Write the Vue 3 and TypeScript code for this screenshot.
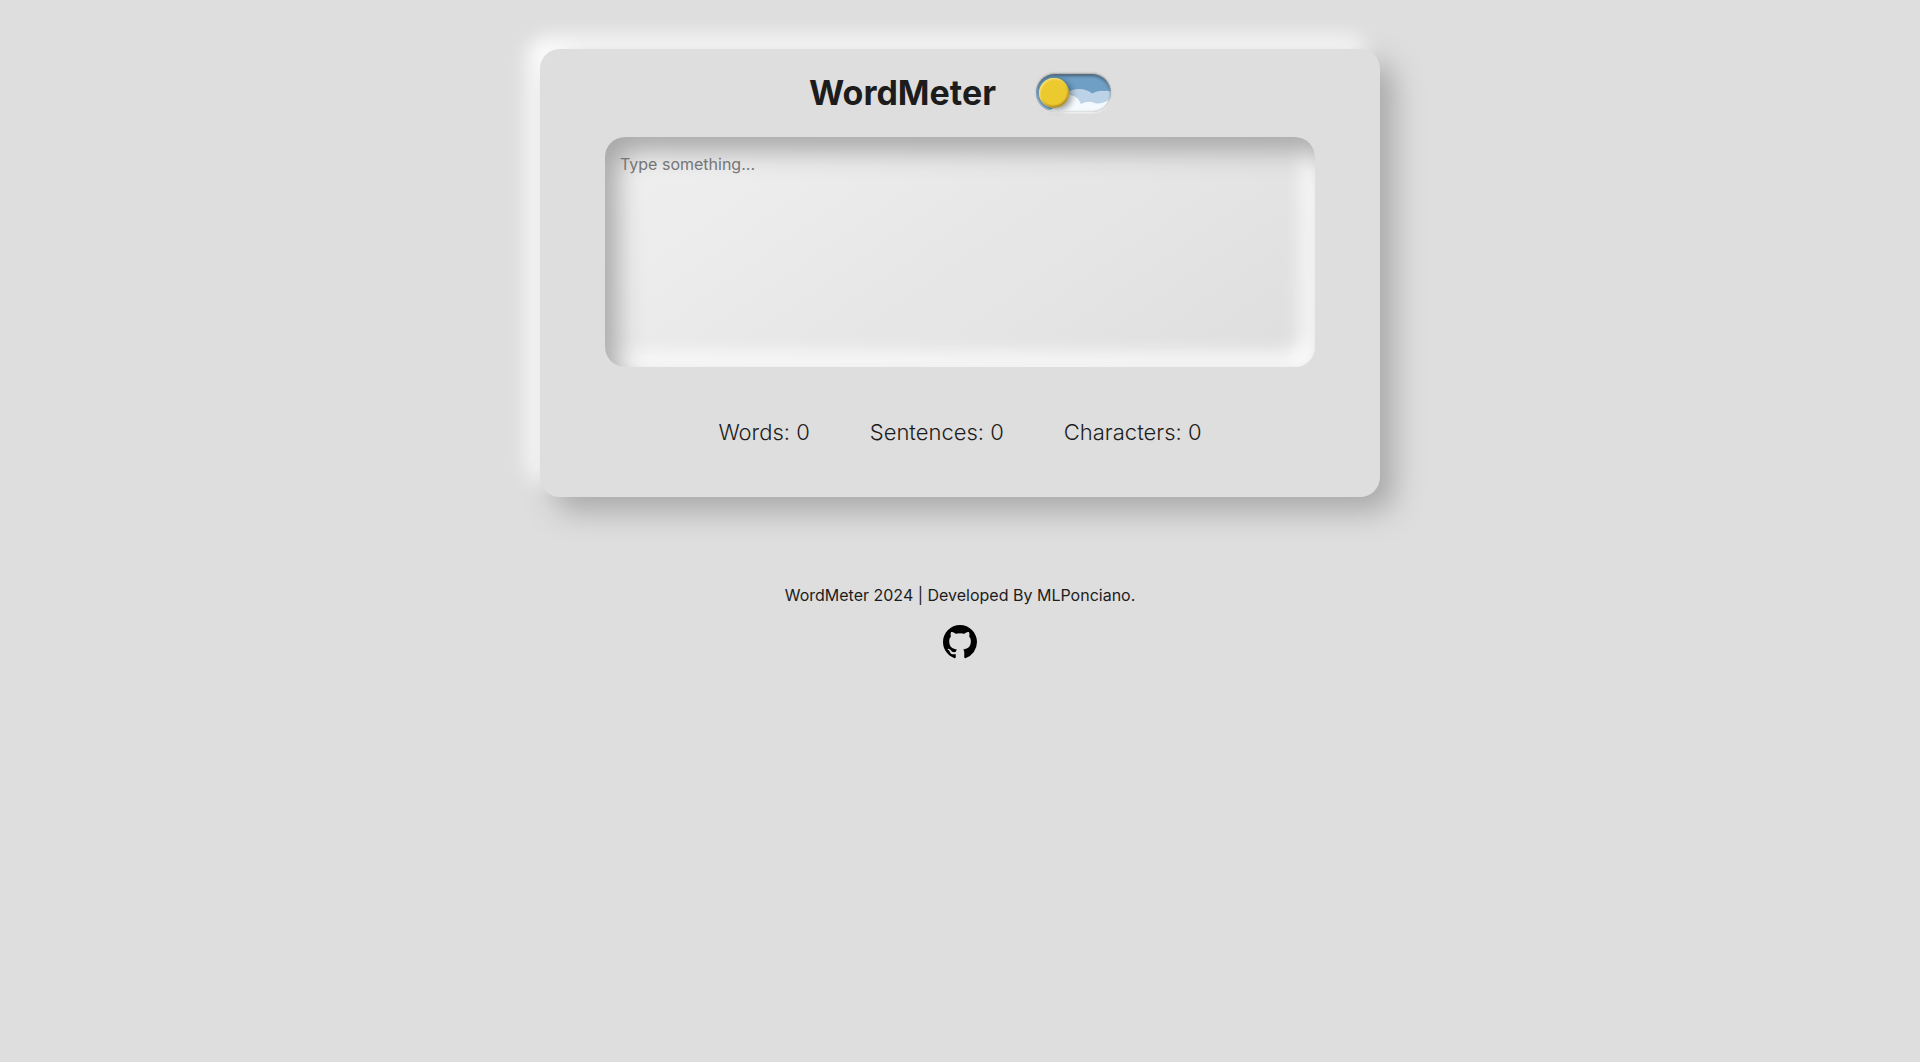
<script setup lang="ts">
import { computed, ref } from 'vue'

const text = ref('')
const dark = ref(false)

const stats = computed(() => [
  { label: 'Words', value: text.value.split(/\s+/).filter(Boolean).length },
  { label: 'Sentences', value: text.value.split(/[.!?]+/).filter((s) => s.trim()).length },
  { label: 'Characters', value: text.value.length },
])
</script>

<template>
  <div class="page" :class="{ dark }">
    <main class="card">
      <header class="head">
        <h1>WordMeter</h1>
        <label class="switch">
          <input v-model="dark" type="checkbox" aria-label="Dark mode" />
          <svg class="sky" viewBox="0 0 75 38" aria-hidden="true">
            <g class="clouds">
              <path
                fill="#bcd2e6"
                d="M30 38V19Q36 15 43 15Q51 15 56 19.500Q62 16 68 17Q73 16 76 18V38Z"
              />
              <path
                fill="#f4fafd"
                d="M8 38Q18 36 24 28Q28 20 34 21Q42 22 45 30Q53 26 60 29.500Q67 30 76 24V38Z"
              />
            </g>
          </svg>
          <span class="sun"></span>
          <span class="rim"></span>
        </label>
      </header>
      <textarea v-model="text" placeholder="Type something..." aria-label="Text to measure"></textarea>
      <div class="stats">
        <span v-for="stat in stats" :key="stat.label">{{ stat.label }}: {{ stat.value }}</span>
      </div>
    </main>
    <footer class="foot">
      <p>WordMeter 2024 | Developed By MLPonciano.</p>
      <a href="#" aria-label="GitHub">
        <svg viewBox="0 0 16 16" aria-hidden="true">
          <path
            d="M8 0C3.58 0 0 3.58 0 8c0 3.54 2.29 6.53 5.47 7.59.4.07.55-.17.55-.38 0-.19-.01-.82-.01-1.49-2.01.37-2.53-.49-2.69-.94-.09-.23-.48-.94-.82-1.13-.28-.15-.68-.52-.01-.53.63-.01 1.08.58 1.23.82.72 1.21 1.87.87 2.33.66.07-.52.28-.87.51-1.07-1.78-.2-3.64-.89-3.64-3.95 0-.87.31-1.59.82-2.15-.08-.2-.36-1.02.08-2.12 0 0 .67-.21 2.2.82.64-.18 1.32-.27 2-.27s1.36.09 2 .27c1.53-1.04 2.2-.82 2.2-.82.44 1.1.16 1.92.08 2.12.51.56.82 1.27.82 2.15 0 3.07-1.87 3.75-3.65 3.95.29.25.54.73.54 1.48 0 1.07-.01 1.93-.01 2.2 0 .21.15.46.55.38A8.01 8.01 0 0 0 16 8c0-4.42-3.58-8-8-8z"
          />
        </svg>
      </a>
    </footer>
  </div>
</template>

<style>
body {
  margin: 0;
  background: #dedede;
}
</style>

<style scoped>
.page {
  box-sizing: border-box;
  min-height: 100vh;
  padding: 49px 24px 24px;
  display: flex;
  flex-direction: column;
  align-items: center;
  background: #dedede;
  color: #1c1c1c;
  font-family: Inter, "Open Sans", sans-serif;
}
.page.dark {
  background: #cfcfcf;
}
.card {
  box-sizing: border-box;
  width: 100%;
  max-width: 840px;
  padding: 0 65px;
  border-radius: 20px;
  background: #dedede;
  box-shadow: 14px 14px 30px #a8a8a8, -12px -12px 20px #ffffff;
}
.head {
  display: flex;
  align-items: center;
  justify-content: center;
  gap: 40px;
  height: 88px;
}
h1 {
  margin: 0;
  font-size: 34px;
  line-height: 48px;
  font-weight: 700;
}
.switch {
  position: relative;
  width: 75px;
  height: 38px;
  border-radius: 19px;
  background: #6f9fc4;
  box-shadow: 0 -1px 2px rgba(0, 0, 0, 0.25), 0 1px 2px rgba(255, 255, 255, 0.8);
  cursor: pointer;
}
.switch input {
  position: absolute;
  inset: 0;
  margin: 0;
  opacity: 0;
}
.sky {
  display: block;
  width: 100%;
  height: 100%;
  border-radius: 19px;
}
.sun {
  position: absolute;
  top: 4px;
  left: 3px;
  width: 30px;
  height: 30px;
  border-radius: 50%;
  background: #ecca2f;
  box-shadow: inset 1px 1px 2px #fbe98c, inset -1px -2px 2px #a9882b, 3px 2px 6px rgba(0, 0, 0, 0.4);
}
.switch input:checked ~ .sun {
  left: 42px;
}
.rim {
  position: absolute;
  inset: 0;
  border-radius: 19px;
  box-shadow: inset 0 2px 3px rgba(20, 30, 40, 0.5), inset 0 -1px 2px rgba(222, 222, 222, 0.9), inset 0 0 2px rgba(222, 222, 222, 0.8);
  pointer-events: none;
}
textarea {
  box-sizing: border-box;
  display: block;
  width: 100%;
  height: 230px;
  padding: 15px;
  border: 0;
  border-radius: 20px;
  outline: 0;
  resize: none;
  background: linear-gradient(145deg, #f0f0f0, #dedede);
  box-shadow: inset 12px 14px 26px #a8a8a8, inset -12px -12px 20px #ffffff;
  color: #1c1c1c;
  font: 400 16px/24px Inter, "Open Sans", sans-serif;
}
textarea::placeholder {
  color: #757575;
}
.stats {
  display: flex;
  flex-wrap: wrap;
  align-items: center;
  justify-content: center;
  gap: 0 60px;
  min-height: 130px;
  font-size: 22px;
  line-height: 32px;
  font-weight: 300;
}
.foot {
  display: flex;
  flex-direction: column;
  align-items: center;
  gap: 18px;
  padding-top: 86px;
  font-size: 16px;
  line-height: 24px;
  font-weight: 400;
}
.foot p {
  margin: 0;
}
.foot a {
  display: block;
  width: 34px;
  height: 34px;
  color: #000;
}
.foot svg {
  display: block;
  width: 100%;
  fill: currentColor;
}
</style>
